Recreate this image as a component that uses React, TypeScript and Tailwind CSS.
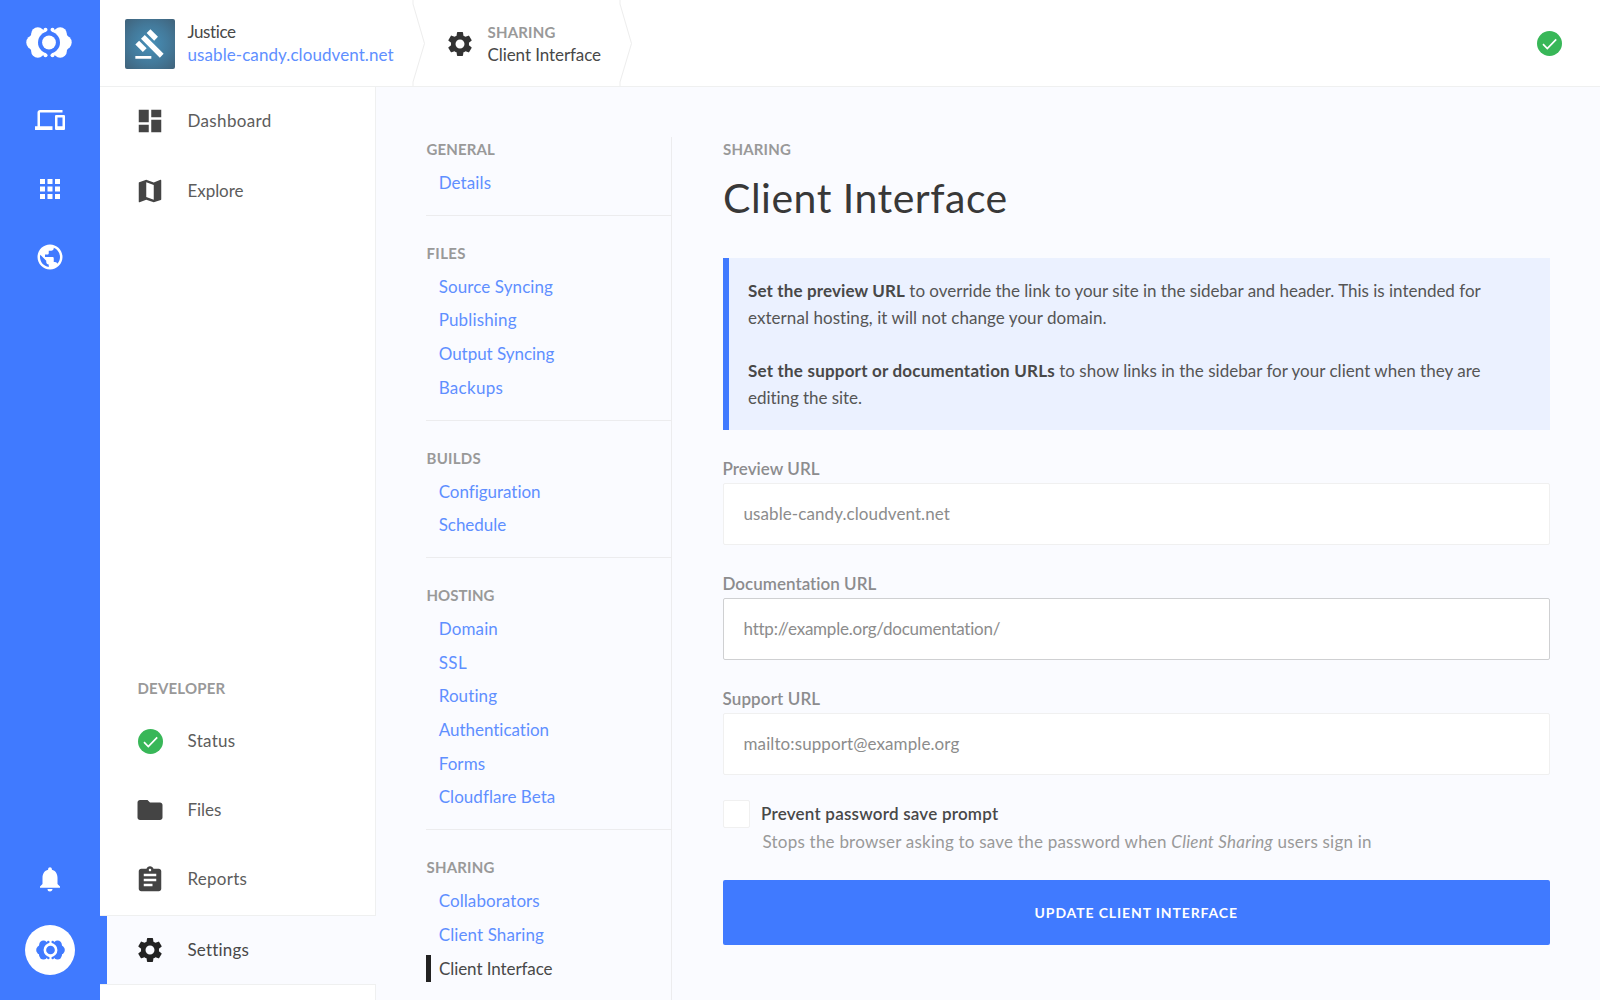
import React from "react";
import {
  MdApps,
  MdAssignment,
  MdDashboard,
  MdDevices,
  MdFolder,
  MdGavel,
  MdMap,
  MdNotifications,
  MdPublic,
  MdSettings,
} from "react-icons/md";

function LogoHalf() {
  return (
    <>
      <circle cx="7.600" cy="15.500" r="7.300" />
      <circle cx="11.800" cy="7" r="6.700" />
      <circle cx="11.800" cy="24" r="6.700" />
      <circle cx="19.500" cy="2.700" r="2" />
      <circle cx="19.500" cy="28.300" r="2" />
      <path d="M4 9.500 L8 3.500 H16 L19.500 2.500 L20 5 V26 L19.500 28.500 L16 27.500 H8 L4 21.500 Z" />
    </>
  );
}

function Logo({ className, cut }: { className: string; cut: string }) {
  return (
    <svg viewBox="0 0 46 31" className={className} fill="currentColor">
      <LogoHalf />
      <g transform="translate(46 0) scale(-1 1)">
        <LogoHalf />
      </g>
      <circle cx="23" cy="15.500" r="11" className={cut} />
      <circle cx="23" cy="15.500" r="6.900" />
    </svg>
  );
}

function Check() {
  return (
    <svg viewBox="0 0 25 25" className="size-[25px] shrink-0">
      <circle cx="12.500" cy="12.500" r="12.500" fill="#38b758" />
      <path d="M6 13.200 L10.300 17.500 L19.200 8.400" fill="none" stroke="#fff" strokeWidth="1.700" />
    </svg>
  );
}

function Chevron() {
  return (
    <svg viewBox="0 0 14 86" className="h-[86px] w-[14px] shrink-0" fill="none" stroke="#ededed">
      <path d="M1 0 V4 L12.500 43.500 L1 82 V86" />
    </svg>
  );
}

type Item = { label: string; track: string };

const sections: { title: string; track: string; items: Item[] }[] = [
  { title: "GENERAL", track: "tracking-[0.123px]", items: [{ label: "Details", track: "tracking-[0.1px]" }] },
  {
    title: "FILES",
    track: "tracking-[0.35px]",
    items: [
      { label: "Source Syncing", track: "tracking-[0.1px]" },
      { label: "Publishing", track: "tracking-[0.15px]" },
      { label: "Output Syncing", track: "tracking-[-0.03px]" },
      { label: "Backups", track: "tracking-[0.3px]" },
    ],
  },
  {
    title: "BUILDS",
    track: "tracking-[0.25px]",
    items: [
      { label: "Configuration", track: "tracking-[-0.03px]" },
      { label: "Schedule", track: "tracking-[-0.03px]" },
    ],
  },
  {
    title: "HOSTING",
    track: "tracking-[0.015px]",
    items: [
      { label: "Domain", track: "tracking-[0.14px]" },
      { label: "SSL", track: "tracking-[0.4px]" },
      { label: "Routing", track: "tracking-[0.1px]" },
      { label: "Authentication", track: "tracking-[-0.02px]" },
      { label: "Forms", track: "tracking-[0.08px]" },
      { label: "Cloudflare Beta", track: "tracking-[0.05px]" },
    ],
  },
  {
    title: "SHARING",
    track: "tracking-[0.19px]",
    items: [
      { label: "Collaborators", track: "tracking-[0.08px]" },
      { label: "Client Sharing", track: "tracking-[0.1px]" },
      { label: "Client Interface", track: "tracking-[-0.08px]" },
    ],
  },
];

function Field({ label, track, value, valueTrack, active }: { label: string; track: string; value: string; valueTrack: string; active?: boolean }) {
  return (
    <label className="block">
      <span className={`block h-[27.5px] font-semibold leading-[27.5px] text-[#8c8c8e] ${track}`}>{label}</span>
      <input
        placeholder={value}
        className={`block h-[62.5px] w-full rounded-[2px] border bg-white px-[20px] text-[17px] outline-none placeholder:text-[#8c8c8c] ${valueTrack} ${active ? "border-[#cfd0d2]" : "border-[#f0f0f0]"}`}
      />
    </label>
  );
}

function NavRow({ icon, label, track, height }: { icon: React.ReactNode; label: string; track: string; height: string }) {
  return (
    <a className={`flex items-center pl-[35px] ${height}`}>
      <span className="flex w-[30px] justify-center text-[30px] text-[#444]">{icon}</span>
      <span className={`pb-[1px] pl-[22.5px] text-[#5c5c5c] ${track}`}>{label}</span>
    </a>
  );
}

export default function App() {
  return (
    <div className="flex h-[1000px] w-[1600px] overflow-hidden bg-[#fafbff] font-['Lato',sans-serif] text-[17px] text-[#484848]">
      <aside className="flex w-[100px] shrink-0 flex-col items-center bg-[#407aff] text-white">
        <Logo className="ml-[-2px] mt-[27px] h-[31px] w-[46px]" cut="fill-[#407aff]" />
        <MdDevices className="mt-[47px] size-[30px]" />
        <MdApps className="mt-[39px] size-[30px]" />
        <MdPublic className="mt-[38px] size-[30px]" />
        <MdNotifications className="mt-auto size-[30px]" />
        <span className="mb-[25px] mt-[31px] flex size-[50px] items-center justify-center rounded-full bg-white text-[#407aff]">
          <Logo className="h-[20px] w-[29px]" cut="fill-white" />
        </span>
      </aside>

      <div className="flex min-w-0 flex-1 flex-col">
        <header className="flex h-[87px] shrink-0 items-center border-b border-[#eff0f0] bg-white pl-[25px]">
          <span className="mt-[1px] flex size-[50px] items-center justify-center rounded-[2px] bg-[radial-gradient(circle,#4790b8_0%,#43799a_55%,#40627a_100%)]">
            <MdGavel className="size-[32px] text-white" />
          </span>
          <div className="w-[237px] pl-[12.5px] pt-[1px] leading-[22.5px]">
            <div className="tracking-[-0.4px]">Justice</div>
            <div className="tracking-[0.08px] text-[#5f8fff]">usable-candy.cloudvent.net</div>
          </div>
          <Chevron />
          <MdSettings className="ml-[19px] mt-[1px] size-[30px] text-[#333]" />
          <div className="w-[144px] pl-[12.5px] pt-[1px] leading-[22.5px]">
            <div className="text-[15px] font-bold tracking-[0.19px] text-[#999]">SHARING</div>
            <div className="tracking-[-0.08px]">Client Interface</div>
          </div>
          <Chevron />
          <span className="ml-auto mr-[38px] mt-[1px]">
            <Check />
          </span>
        </header>

        <div className="flex min-h-0 flex-1">
          <nav className="flex w-[276px] shrink-0 flex-col">
            <div className="flex flex-1 flex-col border-b border-r border-[#eff0f0] bg-white">
              <NavRow icon={<MdDashboard />} label="Dashboard" track="tracking-[0.35px]" height="h-[68px]" />
              <NavRow icon={<MdMap />} label="Explore" track="tracking-[-0.05px]" height="h-[72px]" />
              <div className="mt-auto pl-[37.5px] text-[15px] font-bold leading-[37px] tracking-[0.19px] text-[#999]">DEVELOPER</div>
              <NavRow icon={<Check />} label="Status" track="tracking-[0.3px]" height="h-[69px]" />
              <NavRow icon={<MdFolder />} label="Files" track="tracking-[-0.05px]" height="h-[68px]" />
              <NavRow icon={<MdAssignment />} label="Reports" track="tracking-[0.25px]" height="h-[71px]" />
            </div>
            <a className="flex h-[68px] items-center border-l-[7.500px] border-[#407aff] pb-[1px] pl-[28px]">
              <MdSettings className="size-[30px] text-[#222]" />
              <span className="pl-[22.5px] tracking-[0.18px] text-[#484848]">Settings</span>
            </a>
            <div className="h-[16px] shrink-0 border-r border-t border-[#eff0f0] bg-white" />
          </nav>

          <nav className="ml-[50px] mt-[50px] w-[246px] shrink-0 border-r border-[#ececee]">
            {sections.map((s, i) => (
              <section
                key={s.title}
                className={
                  i === 0
                    ? "-mt-px border-b border-[#ececee] pb-[15.2px]"
                    : i === sections.length - 1
                      ? "h-[170px] pt-[24px]"
                      : "border-b border-[#ececee] pb-[15.2px] pt-[24px]"
                }
              >
                <h3 className={`h-[29.9px] pl-[0.5px] text-[15px] font-bold leading-[26px] text-[#999] ${s.track}`}>{s.title}</h3>
                {s.items.map((it) => (
                  <a key={it.label} className="flex h-[33.700px] items-center">
                    {it.label === "Client Interface" ? (
                      <span className={`border-l-[5.500px] border-[#222] pl-[8px] leading-[27.5px] ${it.track}`}>{it.label}</span>
                    ) : (
                      <span className={`pl-[12.700px] text-[#5f8fff] ${it.track}`}>{it.label}</span>
                    )}
                  </a>
                ))}
              </section>
            ))}
          </nav>

          <main className="ml-[50.5px] mt-[50px] w-[827.5px]">
            <div className="h-[27px] pl-[0.5px] text-[15px] font-bold leading-[25px] tracking-[0.19px] text-[#999]">SHARING</div>
            <h1 className="mt-[9px] h-[84.500px] pl-[0.5px] text-[41px] leading-[50px] tracking-[0.5px] text-[#383838]">Client Interface</h1>
            <div className="h-[172.5px] border-l-[6.250px] border-[#407aff] bg-[#ebf1ff] pl-[19.500px] pt-[19px] leading-[27.5px]">
              <p className="whitespace-nowrap">
                <b className="tracking-[0.13px]">Set the preview URL</b>
                <span className="tracking-[-0.012px] text-[#555]"> to override the link to your site in the sidebar and header. This is intended for</span>
                <br />
                <span className="tracking-[0.06px] text-[#555]">external hosting, it will not change your domain.</span>
              </p>
              <p className="mt-[25px] whitespace-nowrap">
                <b className="tracking-[0.2px]">Set the support or documentation URLs</b>
                <span className="tracking-[0.02px] text-[#555]"> to show links in the sidebar for your client when they are</span>
                <br />
                <span className="tracking-[-0.05px] text-[#555]">editing the site.</span>
              </p>
            </div>
            <div className="mt-[25px] flex flex-col gap-[25px]">
              <Field label="Preview URL" track="tracking-[0.05px]" value="usable-candy.cloudvent.net" valueTrack="tracking-[0.09px]" />
              <Field label="Documentation URL" track="tracking-[0.02px]" value="http://example.org/documentation/" valueTrack="tracking-[-0.23px]" active />
              <Field label="Support URL" track="tracking-[0.12px]" value="mailto:support@example.org" valueTrack="tracking-[0.1px]" />
            </div>
            <div className="mt-[25px] flex items-center leading-[27.5px]">
              <span className="size-[27.5px] rounded-[2px] border border-[#f0f0f0] bg-white" />
              <span className="pl-[11px] pt-[1px] font-semibold leading-[26.5px] tracking-[0.22px]">Prevent password save prompt</span>
            </div>
            <p className="whitespace-nowrap pl-[40px] leading-[28.5px] tracking-[0.22px] text-[#999]">
              Stops the browser asking to save the password when <i>Client Sharing</i> users sign in
            </p>
            <button className="mt-[24px] h-[65px] w-full rounded-[2px] bg-[#407aff] text-[14px] font-bold tracking-[0.88px] text-white">UPDATE CLIENT INTERFACE</button>
          </main>
        </div>
      </div>
    </div>
  );
}
